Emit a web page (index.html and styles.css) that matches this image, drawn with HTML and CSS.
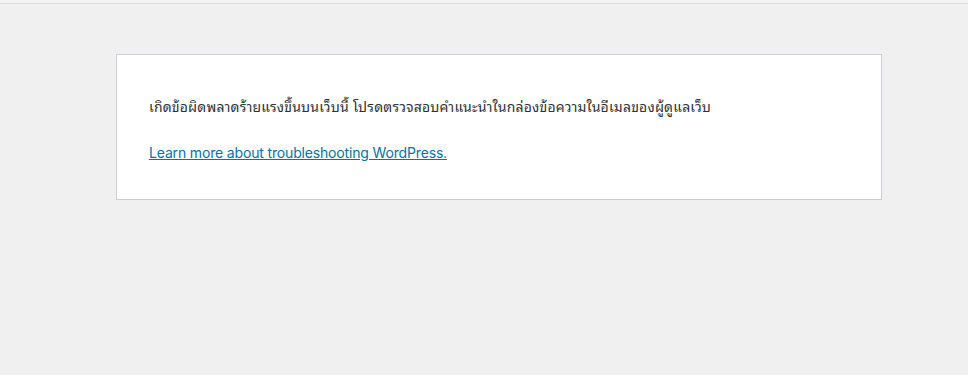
FILE: index.html
```html
<!DOCTYPE html>
<html lang="th">
<head>
<meta charset="utf-8">
<title>WordPress › ข้อผิดพลาด</title>
<link rel="stylesheet" href="styles.css">
</head>
<body>
<div class="topbar"></div>
<div class="error-page">
  <div class="die-message">
    <p class="msg msg-thai">เกิดข้อผิดพลาดร้ายแรงขึ้นบนเว็บนี้ โปรดตรวจสอบคำแนะนำในกล่องข้อความในอีเมลของผู้ดูแลเว็บ</p>
    <p class="msg"><a class="link" href="#">Learn more about troubleshooting WordPress.</a></p>
  </div>
</div>
</body>
</html>
```

FILE: styles.css
```css
html {
  background: #f0f0f0;
}
body {
  margin: 0;
  font-family: Inter, "Noto Sans Thai Looped", "Noto Sans Thai", "Noto Sans", sans-serif;
  color: #2c3338;
}
.topbar {
  height: 3px;
  border-bottom: 1px solid #dcdcde;
  background: #f3f3f3;
}
.error-page {
  width: 766px;
  box-sizing: border-box;
  margin: 50px 0 0 116px;
  background: #fff;
  border: 1px solid #ccd0d4;
  padding: 16px 32px;
  box-shadow: 0 1px 1px rgba(0,0,0,.04);
}
.msg {
  font-size: 14px;
  line-height: 1.5;
  margin: 25px 0 20px;
}
.msg-thai {
  letter-spacing: 0.18px;
}
.link {
  color: #0073aa;
  letter-spacing: -0.16px;
}
```
